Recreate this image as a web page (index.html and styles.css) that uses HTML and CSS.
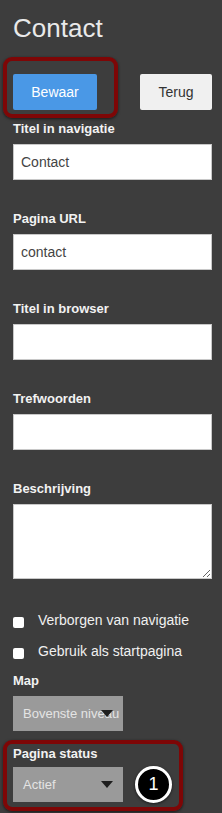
FILE: index.html
```html
<!DOCTYPE html>
<html>
<head>
<meta charset="utf-8">
<link rel="stylesheet" href="styles.css">
</head>
<body>
<div class="panel">
  <h1 class="title">Contact</h1>
  <div class="actions">
    <button class="btn btn-primary">Bewaar</button>
    <button class="btn btn-default">Terug</button>
  </div>
  <div class="field field-first">
    <label class="label">Titel in navigatie</label>
    <input class="input" type="text" value="Contact">
  </div>
  <div class="field">
    <label class="label">Pagina URL</label>
    <input class="input" type="text" value="contact">
  </div>
  <div class="field">
    <label class="label">Titel in browser</label>
    <input class="input" type="text" value="">
  </div>
  <div class="field">
    <label class="label">Trefwoorden</label>
    <input class="input" type="text" value="">
  </div>
  <div class="field">
    <label class="label">Beschrijving</label>
    <textarea class="textarea"></textarea>
  </div>
  <div class="checks">
    <div class="check"><span class="box"></span><span class="check-text">Verborgen van navigatie</span></div>
    <div class="check"><span class="box"></span><span class="check-text">Gebruik als startpagina</span></div>
  </div>
  <div class="field field-map">
    <label class="label">Map</label>
    <div class="select"><span class="select-text">Bovenste niveau</span><span class="arrow"></span></div>
  </div>
  <div class="field field-status">
    <label class="label">Pagina status</label>
    <div class="select"><span class="select-text">Actief</span><span class="arrow"></span></div>
  </div>

  <div class="highlight highlight-save"></div>
  <div class="highlight highlight-status"></div>
  <div class="badge">1</div>
</div>
</body>
</html>
```

FILE: styles.css
```css
html, body {
  margin: 0;
  padding: 0;
  background: #3d3d3d;
}
body {
  width: 222px;
  height: 813px;
  overflow: hidden;
  font-family: "Liberation Sans", Arial, sans-serif;
}
.panel {
  position: relative;
  padding: 0 10px 0 13px;
  display: flex;
  flex-direction: column;
}
.title {
  margin: 13px 0 0 0;
  font-size: 26px;
  line-height: 30px;
  font-weight: normal;
  color: #e9e9e9;
}
.actions {
  display: flex;
  justify-content: space-between;
  margin-top: 31px;
}
.btn {
  height: 36px;
  border: none;
  border-radius: 2px;
  font-family: "Liberation Sans", Arial, sans-serif;
  font-size: 14px;
  padding: 0;
}
.btn-primary {
  width: 84px;
  background: #4a98e6;
  color: #ffffff;
}
.btn-default {
  width: 72px;
  background: #f0f0f0;
  color: #333333;
}
.field {
  display: flex;
  flex-direction: column;
  margin-top: 31px;
}
.field-first {
  margin-top: 11px;
}
.label {
  font-size: 13px;
  line-height: 16px;
  font-weight: bold;
  color: #f2f2f2;
  margin-bottom: 7px;
}
.input, .textarea {
  box-sizing: border-box;
  width: 199px;
  height: 36px;
  margin: 0;
  border: 1px solid #c8c8c8;
  background: #ffffff;
  padding: 0 7px;
  font-family: "Liberation Sans", Arial, sans-serif;
  font-size: 14px;
  color: #444444;
  outline: none;
}
.textarea {
  height: 75px;
  resize: vertical;
  display: block;
}
.checks {
  display: flex;
  flex-direction: column;
  gap: 11px;
  margin-top: 31px;
}
.check {
  display: flex;
  align-items: center;
  height: 20px;
}
.box {
  width: 11px;
  height: 11px;
  background: #ffffff;
  border-radius: 2px;
  margin-top: 4px;
  margin-right: 14px;
  flex: none;
}
.check-text {
  font-size: 14px;
  line-height: 20px;
  color: #f0f0f0;
}
.field-map {
  margin-top: 12px;
}
.field-status {
  margin-top: 15px;
}
.field-status .label {
  margin-bottom: 5px;
}
.select {
  position: relative;
  width: 110px;
  height: 35px;
  background: #9a9a9a;
  overflow: hidden;
  display: flex;
  align-items: center;
}
.select-text {
  padding-left: 10px;
  font-size: 13px;
  color: #e4e4e4;
  white-space: nowrap;
}
.arrow {
  position: absolute;
  left: 88px;
  top: 14px;
  width: 0;
  height: 0;
  border-left: 6.5px solid transparent;
  border-right: 6.5px solid transparent;
  border-top: 7px solid #1e1e1e;
}
.highlight {
  position: absolute;
  box-sizing: border-box;
  border: 4px solid #7e0606;
  border-radius: 9px;
  box-shadow: 0 1px 3px rgba(0, 0, 0, 0.6);
}
.highlight-save {
  left: 3px;
  top: 57px;
  width: 115px;
  height: 61px;
}
.highlight-status {
  left: 3px;
  top: 740px;
  width: 180px;
  height: 71px;
}
.badge {
  position: absolute;
  left: 135px;
  top: 766px;
  box-sizing: border-box;
  width: 37px;
  height: 37px;
  border-radius: 50%;
  border: 3px solid #ffffff;
  background: #000000;
  color: #ffffff;
  font-size: 18px;
  line-height: 31px;
  text-align: center;
  box-shadow: 0 1px 3px rgba(0, 0, 0, 0.6);
}
```
